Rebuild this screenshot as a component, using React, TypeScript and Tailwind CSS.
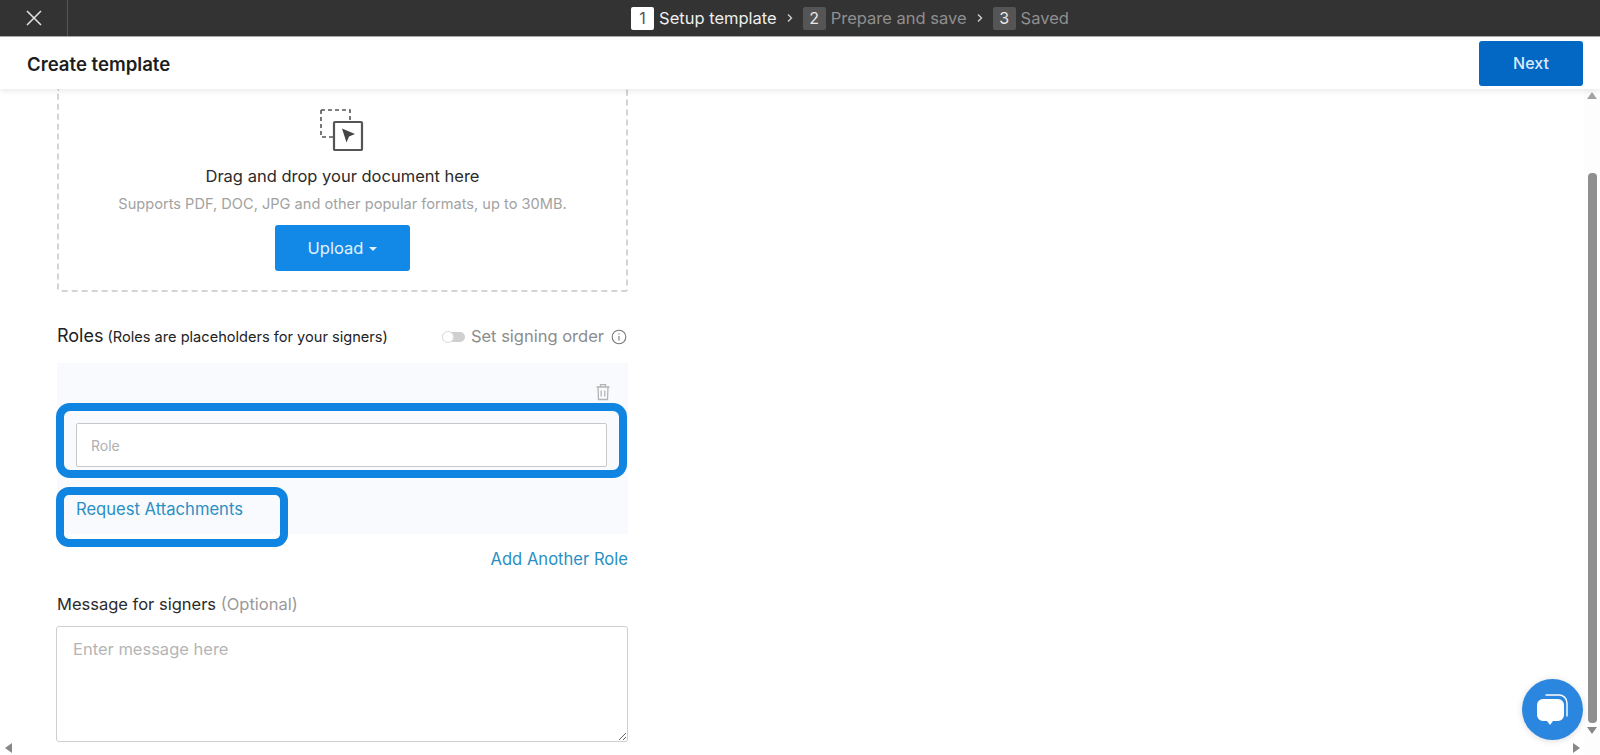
import React from "react";

const Step = ({ n, label, active }: { n: string; label: string; active?: boolean }) => (
  <div className="flex items-center gap-[5px]">
    <span className={active ? "flex h-[23px] w-[23px] items-center justify-center rounded-[2px] bg-white text-[16px] text-[#555]" : "flex h-[23px] w-[23px] items-center justify-center rounded-[2px] bg-[#555] text-[16px] text-[#e8e8e8]"}>{n}</span>
    <span className={active ? "text-[16.5px] text-[#eeeeee]" : "text-[16.5px] text-[#8f8f8f]"}>{label}</span>
  </div>
);

const Chevron = () => (
  <svg width="8" height="10" viewBox="0 0 8 10" className="mx-[9px]" fill="none" stroke="#cfcfcf" strokeWidth="1.4"><path d="M2 1.5 5.5 5 2 8.5" /></svg>
);

export default function App() {
  return (
    <div className="flex h-[755px] w-[1600px] flex-col overflow-hidden bg-white text-[#222] [font-family:Inter,'Liberation_Sans',sans-serif]">
      <div className="relative flex h-[37px] shrink-0 items-center justify-center border-b border-[#aaa] bg-[#333333]">
        <div className="absolute left-0 top-0 flex h-full w-[68px] items-center justify-center border-r border-[#555]">
          <svg width="16" height="16" viewBox="0 0 16 16" fill="none" stroke="#e4e4e4" strokeWidth="1.5"><path d="M1 1 15 15M15 1 1 15" /></svg>
        </div>
        <div className="ml-[100px] flex items-center">
          <Step n="1" label="Setup template" active />
          <Chevron />
          <Step n="2" label="Prepare and save" />
          <Chevron />
          <Step n="3" label="Saved" />
        </div>
      </div>

      <div className="z-10 flex h-[52px] shrink-0 items-center justify-between bg-white pl-[27px] pr-[17px] shadow-[0_2px_6px_rgba(0,0,0,0.09)]">
        <h1 className="pt-[2px] text-[18.6px] font-semibold leading-none text-[#1d1d1d]">Create template</h1>
        <button className="h-[45px] w-[104px] rounded-[3px] bg-[#0268c4] text-[16px] font-medium text-[#dbeafa]">Next</button>
      </div>

      <div className="flex min-h-0 flex-1">
        <div className="min-w-0 flex-1 overflow-hidden">
          <div className="relative ml-[57px] w-[571px]">
            <div className="flex h-[203px] flex-col items-center rounded-b-[3px] border-x-2 border-b-2 border-dashed border-[#d4d4d4] pt-[20px]">
              <svg width="44" height="42" viewBox="0 0 44 42" fill="none" className="ml-[-1px]">
                <path d="M1 1h29v11M1 1v27h12" stroke="#555" strokeWidth="1.6" strokeDasharray="4 3" />
                <rect x="14" y="13" width="28" height="28" stroke="#555" strokeWidth="2.2" rx="1" />
                <path d="M22 19.5 35 25l-6 2.5-2.5 6z" fill="#444" />
              </svg>
              <p className="mt-[13px] text-[16.5px] leading-[24px] text-[#2b2b2b]">Drag and drop your document here</p>
              <p className="mt-[6px] text-[14.6px] leading-[20px] text-[#a2a2a2]">Supports PDF, DOC, JPG and other popular formats, up to 30MB.</p>
              <button className="mt-[11px] flex h-[46px] w-[135px] items-center justify-center gap-[6px] rounded-[3px] bg-[#1289e6] text-[16.5px] text-[#e2f1fd]">
                Upload
                <span className="mt-[2px] h-0 w-0 border-x-[4px] border-t-[4px] border-x-transparent border-t-[#e2f1fd]" />
              </button>
            </div>

            <div className="mt-[32px] flex items-center justify-between">
              <p className="flex items-baseline gap-[4px] text-[18px] leading-[24px] text-[#222]">Roles <span className="text-[14.6px]">(Roles are placeholders for your signers)</span></p>
              <div className="flex items-center gap-[6px] pr-[1px] text-[16.5px] text-[#8c8c8c]">
                <span className="relative h-[10px] w-[23px] rounded-full bg-[#d0d0d0]">
                  <span className="absolute left-0 top-[-1px] h-[12px] w-[12px] rounded-full border border-[#ddd] bg-white" />
                </span>
                <span>Set signing order</span>
                <svg width="16" height="16" viewBox="0 0 16 16" className="ml-[1px]" fill="none" stroke="#777" strokeWidth="1.1"><circle cx="8" cy="8" r="6.8" /><path d="M8 7v4.4M8 4.2v1.3" /></svg>
              </div>
            </div>

            <div className="relative mt-[14px] h-[171px] bg-[#f9fafd] pl-[19px] pr-[21px]">
              <div className="flex justify-end pt-[20px]">
                <svg width="16" height="18" viewBox="0 0 16 18" className="mr-[-4px]" fill="none" stroke="#b4b4b4" strokeWidth="1.3"><path d="M1.5 4h13M5.5 4V1.7h5V4M3 4l.5 12.5h9L13 4M6.2 7.5v6M9.8 7.5v6" /></svg>
              </div>
              <div className="mt-[22px] flex h-[44px] items-center rounded-[2px] border border-[#c8c8c8] bg-white pl-[14px] text-[14px] text-[#b0b0b0]">Role</div>
              <p className="mt-[32px] text-[16.6px] leading-[20px] text-[#2a8fc4]">Request Attachments</p>
              <div className="absolute left-[-1px] right-[1px] top-[40px] h-[75px] rounded-[14px] border-[8px] border-[#0f84e0]" />
              <div className="absolute left-[-1px] top-[124px] h-[60px] w-[232px] rounded-[13px] border-[8px] border-[#0f84e0]" />
            </div>

            <p className="mt-[13px] text-right text-[16.6px] leading-[24px] text-[#2a8fc4]">Add Another Role</p>

            <p className="mt-[21px] text-[16.5px] leading-[24px] text-[#2b2b2b]">Message for signers <span className="text-[#9a9a9a]">(Optional)</span></p>
            <textarea readOnly placeholder="Enter message here" className="mt-[10px] ml-[-1px] block h-[116px] w-[572px] rounded-[3px] border border-[#cfcfcf] bg-white px-[16px] py-[11px] text-[16.5px] leading-[22px] outline-none placeholder:text-[#b5b5b5]" />
          </div>
        </div>

        <div className="relative flex w-[16px] shrink-0 flex-col items-center bg-[#fdfdfd]">
          <span className="mt-[3px] h-0 w-0 border-x-[5px] border-b-[7px] border-x-transparent border-b-[#a3a3a3]" />
          <div className="mt-[74px] h-[550px] w-[9px] rounded-[4px] bg-[#8f8f8f]" />
          <span className="mt-[4px] h-0 w-0 border-x-[5px] border-t-[7px] border-x-transparent border-t-[#888]" />
          <span className="absolute bottom-[2px] left-[-11px] h-0 w-0 border-y-[5px] border-l-[7px] border-y-transparent border-l-[#888]" />
        </div>
      </div>

      <div className="absolute left-[5px] top-[743px] h-0 w-0 border-y-[5px] border-r-[7px] border-y-transparent border-r-[#888]" />
      <div className="absolute left-[1522px] top-[679px] flex h-[61px] w-[61px] items-center justify-center rounded-full bg-[#2b86df] shadow-[0_1px_6px_rgba(0,0,0,0.15)]">
        <svg width="36" height="34" viewBox="0 0 36 34" className="ml-[-1px]">
          <path d="M12 2h13c4 0 8 3 8 8v13" fill="none" stroke="#ffffff" strokeWidth="1.4" strokeLinecap="round" />
          <path d="M9 6h15a6 6 0 0 1 6 6v10a6 6 0 0 1-6 6h-5l-3 4-3-4H9a6 6 0 0 1-6-6V12a6 6 0 0 1 6-6z" fill="#ffffff" />
        </svg>
      </div>
    </div>
  );
}
